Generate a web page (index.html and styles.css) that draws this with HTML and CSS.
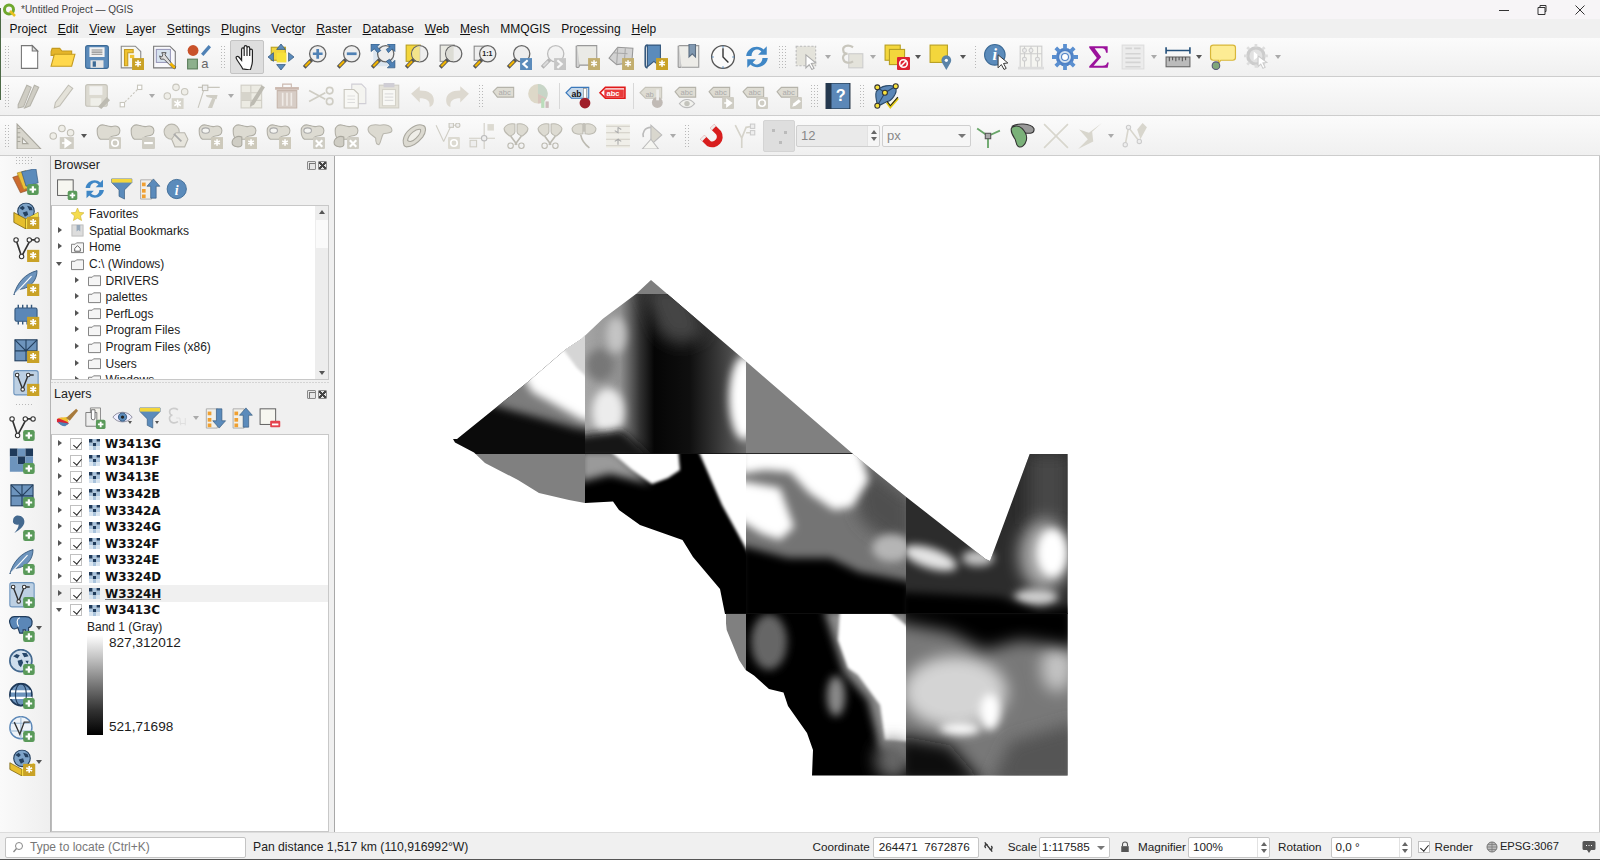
FILE: index.html
```html
<!DOCTYPE html>
<html lang="en">
<head>
<meta charset="utf-8">
<title>*Untitled Project — QGIS</title>
<link rel="stylesheet" href="styles.css">
</head>
<body>
<svg class="sprites">
<defs>
<g id="g"><rect x="13" y="13" width="11" height="11" fill="#c9a227"/><path d="M18.5 15v6M15.9 16.5l5.2 3M15.9 19.5l5.2-3" stroke="#fff" stroke-width="1.5"/></g>
<g id="p"><rect x="13" y="14" width="10.5" height="10" rx="2" fill="#5a9a5a"/><path d="M18.2 16v6M15.2 19h6" stroke="#fff" stroke-width="2"/></g>
<g id="m"><circle cx="14.500" cy="9" r="7.500" fill="#eee" stroke="#666" stroke-width="1.200"/><path d="M9 14.500L2 21.500" stroke="#555" stroke-width="3.500"/><path d="M7.500 16L3 20.500" stroke="#f0b400" stroke-width="2"/></g>
<g id="bl"><path d="M2 7c0-4 3-6 7-5 3 1 5 2 8 1 3-1 6 1 6 4 0 4-3 5-6 5-3 0-3 1-4 3H5C3 14 2 11 2 7z" fill="#dddbd2" stroke="#b0aea5"/></g>
<g id="tag"><path d="M1 8l4-4h15v9H5z" fill="#dedcd3" stroke="#b5b3aa"/><text x="6" y="11.500" class="tt" fill="#aaa">abc</text></g>
<g id="vl"><path d="M3 4L8 19 16 4 22 4" fill="none" stroke="#333" stroke-width="1.500"/><circle cx="3" cy="4" r="2" fill="#fff" stroke="#333"/><circle cx="8" cy="19" r="2" fill="#fff" stroke="#333"/><circle cx="15" cy="4" r="2" fill="#fff" stroke="#333"/><circle cx="22" cy="4" r="2" fill="#fff" stroke="#333"/></g>
<g id="fe"><path d="M1 23C4 12 11 4 22 1c0 8-5 16-16 17-2 1-3 3-5 5z" fill="#6d94bd" stroke="#34577c" stroke-width=".8"/><path d="M2 22L17 6" stroke="#fff"/></g>
<g id="ms"><rect x="2" y="3" width="20" height="19" fill="#6d94bd" stroke="#24405f"/><path d="M2 3l10 10L22 3M12 3v19M2 13h20" stroke="#24405f" fill="none"/></g>
<g id="gl"><circle cx="11" cy="11" r="10" fill="#cfdeec" stroke="#44698f" stroke-width="1.500"/><path d="M4 7l3-2 3 1-2 3zM12 4l4 0 2 3-4 1zM8 11l4-1 1 3-2 4-2-2zM15 11l3 0-1 3z" fill="#26476a"/></g>
<g id="wd"><circle cx="12" cy="8" r="7.500" fill="#7da3c8" stroke="#24405f"/><path d="M6 5l3-2 2 2-2 2zM13 3l4 1 1 3-3 0zM9 9l4-1 1 3-3 2z" fill="#24405f"/></g>
<g id="cr"><path d="M13 10l0 12 3-3 2.500 4.500 2-1-2.500-4.500 4-.5z" fill="#fff" stroke="#333" stroke-width=".9"/></g>
<symbol id="new" viewBox="0 0 24 24"><path d="M5 1.500h10l5 5v16H5z" fill="#fff" stroke="#777"/><path d="M15 1.500v5h5z" fill="#ddd" stroke="#777"/></symbol>
<symbol id="open" viewBox="0 0 24 24"><path d="M1 7l1-3h7l2 2.500h9v4H1z" fill="#e5b52a" stroke="#c49a1f"/><path d="M1 20.500h19l3-11H4z" fill="#ffd84c" stroke="#c49a1f"/></symbol>
<symbol id="save" viewBox="0 0 24 24"><rect x="1.500" y="1.500" width="21" height="21" rx="2" fill="#5b8bbb" stroke="#3c6a96"/><rect x="5" y="3" width="14" height="9" fill="#f2f2f2"/><path d="M7 5.500h10M7 7.500h10M7 9.500h10" stroke="#888"/><rect x="6" y="15" width="12" height="7" fill="#e5e5e5"/><rect x="8" y="16" width="3" height="5" fill="#3c6a96"/></symbol>
<symbol id="lay" viewBox="0 0 24 24"><path d="M3 2h13l5 5v15H3z" fill="#f8f8f2" stroke="#888"/><path d="M6 5h8v3H9v12H6z" fill="#f0c330" stroke="#c49a1f"/><rect x="11" y="10" width="4" height="3" fill="#f0c330"/><use href="#g"/></symbol>
<symbol id="mgr" viewBox="0 0 24 24"><path d="M1.500 2h15l5 5v15h-20z" fill="#f8f8fb" stroke="#777"/><rect x="4" y="5" width="13" height="12" fill="#d7e3ef" stroke="#99b"/><path d="M9 8l4 0-1 2 7 9 3 2-1 2-2-1-8-8-3 0-1-3 2 1 1-2z" fill="#ddd" stroke="#444" stroke-width=".8"/><path d="M17 18l4 4" stroke="#f0b400" stroke-width="2.500"/></symbol>
<symbol id="sty" viewBox="0 0 24 24"><circle cx="6.500" cy="6" r="5" fill="#c9522a"/><path d="M15 10l7-8" stroke="#4f81b5" stroke-width="3"/><rect x="1.500" y="14" width="9" height="9" fill="#8db08d" stroke="#5a7c5a"/><text x="14" y="22" class="ta">a</text></symbol>
<symbol id="pan" viewBox="0 0 24 24"><path d="M8 23c-1-3-5-7-6-10-.4-1.500 1.500-2 2.500-1L7 15V5c0-2 2.400-2 2.400 0v6-8c0-2 2.600-2 2.600 0v8-7c0-2 2.500-2 2.500 0v7-5c0-1.800 2.500-1.800 2.500 0v10c0 3-1 5-2 8z" fill="#fff" stroke="#222" stroke-width="1.100"/></symbol>
<symbol id="pans" viewBox="0 0 24 24"><rect x="3" y="3" width="13" height="12" fill="#f3d63c" stroke="#b79f20"/><rect x="8" y="8" width="9" height="9" fill="#f7e23c"/><path d="M12 0l4 5H8zM12 24l-4-5h8zM0 12l5-4v8zM24 12l-5 4V8z" fill="#5b8bbb" stroke="#34577c" stroke-width=".7"/></symbol>
<symbol id="zin" viewBox="0 0 24 24"><use href="#m"/><path d="M14.500 4.500v9M10 9h9" stroke="#4f81b5" stroke-width="2.500"/></symbol>
<symbol id="zout" viewBox="0 0 24 24"><use href="#m"/><path d="M10 9h9" stroke="#4f81b5" stroke-width="2.500"/></symbol>
<symbol id="zfull" viewBox="0 0 24 24"><rect x="3" y="1.500" width="19" height="19" fill="#dbe5ef"/><use href="#m"/><path d="M1 0h8L6.500 2.500 10 6 7 8 4 4.500 1 7zM23 0v7l-2.500-2.500L17 8l-2-3 3.500-2.500L16 0zM23 22h-7l2.500-2.500L15 16l3-2 2.500 3.500L23 15z" fill="#4f81b5" stroke="#2a5278" stroke-width=".6"/></symbol>
<symbol id="zsel" viewBox="0 0 24 24"><rect x="2" y="1" width="13" height="15" fill="#f3d63c" stroke="#b79f20"/><use href="#m"/><path d="M14.500 1.500v15" stroke="#bbb"/><path d="M14.500 2a7 7 0 0 0 0 14z" fill="#f3e48a"/></symbol>
<symbol id="zlay" viewBox="0 0 24 24"><rect x="2" y="1" width="13" height="15" fill="#e9e9e2" stroke="#888"/><use href="#m"/><path d="M14.500 2a7 7 0 0 0 0 14z" fill="#dcdcd5"/></symbol>
<symbol id="znat" viewBox="0 0 24 24"><rect x="2" y="2" width="12" height="13" fill="#eee" stroke="#888"/><use href="#m"/><text x="9.500" y="11.500" class="tb1">1:1</text></symbol>
<symbol id="zlast" viewBox="0 0 24 24"><use href="#m"/><rect x="13" y="13" width="11" height="11" fill="#5b8bbb"/><path d="M20 15l-4 3.500 4 3.500" stroke="#fff" stroke-width="2" fill="none"/></symbol>
<symbol id="znext" viewBox="0 0 24 24"><use href="#m"/><rect x="13" y="13" width="11" height="11" fill="#5b8bbb"/><path d="M16 15l4 3.500-4 3.500" stroke="#fff" stroke-width="2" fill="none"/></symbol>
<symbol id="nmap" viewBox="0 0 24 24"><path d="M2 2c2-1 3 0 3 2v16c0 2-2 2-3 1z" fill="#ccc" stroke="#888"/><path d="M3 1.500h18v18H5" fill="#e8e8e0" stroke="#888"/><use href="#g"/></symbol>
<symbol id="n3d" viewBox="0 0 24 24"><path d="M1 13L9 3l14 1-1 13-14 2z" fill="#ccc" stroke="#888"/><path d="M5 8l13 1M9 3l-1 16M16 4l-1 14" stroke="#999" fill="none"/><use href="#g"/></symbol>
<symbol id="nbm" viewBox="0 0 24 24"><path d="M5 1h12v20l-6-5-6 5z" fill="#5b8bbb" stroke="#34577c"/><path d="M5 1c-2 0-2 2-2 3v15c0 2 1 3 2 3" fill="none" stroke="#34577c" stroke-width="1.500"/><use href="#g"/></symbol>
<symbol id="sbm" viewBox="0 0 24 24"><path d="M2 2c2-1 3 0 3 2v16c0 2-2 2-3 1z" fill="#ccc" stroke="#888"/><path d="M3 1.500h18v20H5" fill="#ecebe3" stroke="#888"/><path d="M12 0h6v12l-3-3-3 3z" fill="#5b8bbb" stroke="#34577c"/></symbol>
<symbol id="clk" viewBox="0 0 24 24"><circle cx="12" cy="12" r="10.500" fill="#fafafa" stroke="#555" stroke-width="1.200"/><path d="M12 4v8l5 5" stroke="#333" fill="none" stroke-width="1.300"/><path d="M12 1.500v2M12 20.500v2M1.500 12h2M20.500 12h2" stroke="#5b8bbb"/></symbol>
<symbol id="ref" viewBox="0 0 24 24"><path d="M2 11C3 3 13 0 18 5l3-3v8h-8l3-3C12 3 7 6 7 11z" fill="#3f87c6"/><path d="M22 13c-1 8-11 11-16 6l-3 3v-8h8l-3 3c4 4 9 1 9-4z" fill="#3f87c6"/></symbol>
<symbol id="sel" viewBox="0 0 24 24"><rect x="2" y="2" width="18" height="18" fill="#e4e3db" stroke="#bbb" stroke-dasharray="2 1.500"/><path d="M11 10l0 12 3-3 2.500 4.500 2-1-2.500-4.500 4-.5z" fill="#fff" stroke="#aaa"/></symbol>
<symbol id="sexp" viewBox="0 0 24 24"><rect x="9" y="9" width="13" height="13" fill="#e4e3db" stroke="#ccc"/><path d="M13 3C8 0 3 2 4 6c0 2 2 3 4 3-3 0-5 2-4 5 1 4 6 4 9 2" fill="none" stroke="#c8c6bd" stroke-width="2"/></symbol>
<symbol id="desel" viewBox="0 0 24 24"><rect x="1" y="1" width="14" height="14" fill="#f3d63c" stroke="#b79f20"/><rect x="5" y="5" width="14" height="14" fill="#f3d63c" stroke="#b79f20"/><rect x="12" y="12" width="12" height="12" rx="1" fill="#d23"/><circle cx="18" cy="18" r="3.500" fill="none" stroke="#fff" stroke-width="1.500"/><path d="M15.500 20.500l5-5" stroke="#fff" stroke-width="1.500"/></symbol>
<symbol id="sloc" viewBox="0 0 24 24"><rect x="1" y="1" width="16" height="16" fill="#f3d63c" stroke="#b79f20"/><path d="M16 24l-4-7a4.500 4.500 0 1 1 8 0z" fill="#5b84a8"/><circle cx="16" cy="15" r="1.500" fill="#fff"/></symbol>
<symbol id="idn" viewBox="0 0 24 24"><circle cx="10" cy="10" r="9.500" fill="#5b8bbb" stroke="#3c6a96"/><text x="10" y="15" class="ti">i</text><use href="#cr"/></symbol>
<symbol id="aba" viewBox="0 0 24 24"><rect x="2" y="2" width="20" height="20" fill="#f5f5f1" stroke="#ccc"/><path d="M2 9h20M6 2v20M12 2v20M18 2v20" stroke="#ccc" fill="none"/><rect x="0" y="21" width="24" height="2.500" fill="#ddd"/><circle cx="6" cy="6" r="1.800" fill="#eee" stroke="#ccc"/><circle cx="12" cy="6" r="1.800" fill="#eee" stroke="#ccc"/><circle cx="18" cy="14" r="1.800" fill="#eee" stroke="#ccc"/><circle cx="6" cy="14" r="1.800" fill="#eee" stroke="#ccc"/></symbol>
<symbol id="gear" viewBox="0 0 24 24"><circle cx="12" cy="12" r="7" fill="#d4e2f0" stroke="#4f81c5" stroke-width="3"/><path d="M12 0v5M12 19v5M0 12h5M19 12h5M3.500 3.500L7 7M17 17l3.500 3.500M3.500 20.500L7 17M17 7l3.500-3.500" stroke="#5a8fd0" stroke-width="3.500"/><circle cx="12" cy="12" r="3.200" fill="#fff" stroke="#4f81c5"/></symbol>
<symbol id="sum" viewBox="0 0 24 24"><path d="M3 2h17v6l-1.500 0C18 5 17 4 14 4H8l6 8-7 8h8c3 0 4-1 4.500-3l1.500 0-1 5H3v-1.500L10 13 3 3.500z" fill="#9b119b"/></symbol>
<symbol id="tbl" viewBox="0 0 24 24"><rect x="2" y="1" width="20" height="22" fill="#ececec" stroke="#ddd"/><path d="M5 4h6M13 4h6M5 9h14M5 13h14M5 17h14M5 21h14" stroke="#d4d4d4" stroke-width="1.500"/></symbol>
<symbol id="mea" viewBox="0 0 24 24"><path d="M1 6h22M1 3v6M23 3v6" stroke="#24507a" stroke-width="1.500" fill="none"/><rect x="1" y="12" width="22" height="9" fill="#bbb" stroke="#666"/><path d="M4 12v4M7 12v3M10 12v4M13 12v3M16 12v4M19 12v3" stroke="#555"/></symbol>
<symbol id="ann" viewBox="0 0 24 24"><path d="M3 1h18c1.500 0 2.500 1 2.500 2.500v9c0 1.500-1 2.500-2.500 2.500H10l-3 4 1-4H3C1.500 15 .5 14 .5 12.500v-9C.5 2 1.500 1 3 1z" fill="#fdec94" stroke="#d8b73a" stroke-width="1.100"/><circle cx="5.500" cy="20" r="3.500" fill="#7fa67a" stroke="#557"/></symbol>
<symbol id="act" viewBox="0 0 24 24"><circle cx="11" cy="11" r="7.500" fill="#e2e2e2" stroke="#ccc" stroke-width="3"/><path d="M11 0v3M11 19v3M0 11h3M19 11h3M3 3l2 2M17 17l2 2M3 19l2-2M17 5l2-2" stroke="#ddd" stroke-width="2.500"/><path d="M9 7l5 4-5 4z" fill="#fff"/><path d="M13 11l0 10 2.500-2.500 2 4 2-1-2-4 3.500-.5z" fill="#fff" stroke="#ccc"/></symbol>
<symbol id="pens" viewBox="0 0 24 24"><path d="M2 20L10 2l4 2-7 18-5 1zM9 21L17 2l4 2-8 17-5 2z" fill="#cfcdc4" stroke="#b5b3aa"/></symbol>
<symbol id="pen" viewBox="0 0 24 24"><path d="M5 18L17 2l4 3-12 16-5 2z" fill="#e4e2d9" stroke="#c0beb5"/></symbol>
<symbol id="savee" viewBox="0 0 24 24"><rect x="1.500" y="1.500" width="20" height="20" rx="2" fill="#dcdad1" stroke="#c5c3ba"/><rect x="5" y="3" width="12" height="8" fill="#f2f2f0"/><rect x="6" y="14" width="10" height="7" fill="#efefe9"/><path d="M13 22l8-9 3 3-8 8z" fill="#bdbbb2"/></symbol>
<symbol id="lin" viewBox="0 0 24 24"><path d="M4 20L20 4" stroke="#c8c6bd" stroke-dasharray="2 1.500"/><rect x="2" y="18" width="4" height="4" fill="#fff" stroke="#c8c6bd"/><rect x="18" y="2" width="4" height="4" fill="#fff" stroke="#c8c6bd"/></symbol>
<symbol id="ptg" viewBox="0 0 24 24"><circle cx="4" cy="12" r="3" fill="#efeee8" stroke="#c8c6bd"/><circle cx="12" cy="4" r="3" fill="#efeee8" stroke="#c8c6bd"/><circle cx="20" cy="8" r="3" fill="#efeee8" stroke="#c8c6bd"/><rect x="8" y="14" width="11" height="10" fill="#d6d4cb"/><path d="M13.500 15.500v7M10.500 17l6 4M10.500 21l6-4" stroke="#fff" stroke-width="1.400"/></symbol>
<symbol id="vtx" viewBox="0 0 24 24"><path d="M1 4h20M7 4L1 23" stroke="#c8c6bd" fill="none"/><rect x="5" y="2" width="5" height="5" fill="#eee" stroke="#c0beb5"/><path d="M8 11l11 0-1 4-9-2zM14 14l-4 9h4l3-8z" fill="#cfcdc4"/></symbol>
<symbol id="atr" viewBox="0 0 24 24"><rect x="1" y="2" width="19" height="21" fill="#ecebe3" stroke="#cfcdc4"/><path d="M1 9h19M1 16h19M10 2v21" stroke="#cfcdc4"/><rect x="1" y="9" width="9" height="7" fill="#d6d4cb"/><path d="M10 18L20 2l3 2-10 16-4 2z" fill="#bdbbb2"/></symbol>
<symbol id="trash" viewBox="0 0 24 24"><path d="M1 5h22" stroke="#cbb8ae" stroke-width="2.500"/><path d="M8 4V1h8v3" fill="none" stroke="#cbb8ae"/><path d="M3 7h18v16H3z" fill="#d7cdc6" stroke="#c5b5ab"/><path d="M8 9v12M12 9v12M16 9v12" stroke="#efeae6" stroke-width="1.500"/></symbol>
<symbol id="cut" viewBox="0 0 24 24"><path d="M1 7l15 8M1 17l15-8" stroke="#cfcdc4" stroke-width="1.500"/><circle cx="20" cy="7" r="3" fill="none" stroke="#cfcdc4" stroke-width="1.500"/><circle cx="20" cy="17" r="3" fill="none" stroke="#cfcdc4" stroke-width="1.500"/></symbol>
<symbol id="cpy" viewBox="0 0 24 24"><path d="M9 1h9l4 4v14H9z" fill="#f4f4f0" stroke="#d0ced5"/><path d="M2 6h9l4 4v13H2z" fill="#f8f8f5" stroke="#c8c6bd"/><path d="M5 12h7M5 15h7M5 18h7" stroke="#ddd"/></symbol>
<symbol id="pst" viewBox="0 0 24 24"><rect x="3" y="2" width="18" height="21" fill="#e4e2d9" stroke="#cfcdc4"/><rect x="7" y="0" width="10" height="4" fill="#d0ced5"/><rect x="6" y="6" width="12" height="15" fill="#f8f8f5" stroke="#d4d2c9"/><path d="M8 10h8M8 13h8M8 16h8" stroke="#ddd"/></symbol>
<symbol id="und" viewBox="0 0 24 24"><path d="M1 10l8-7v4c8 0 13 3 13 9 0 4-2 6-4 6 1-6-3-8-9-8v4z" fill="#ddd9d0"/></symbol>
<symbol id="red" viewBox="0 0 24 24"><path d="M23 10l-8-7v4C7 7 2 10 2 16c0 4 2 6 4 6-1-6 3-8 9-8v4z" fill="#ddd9d0"/></symbol>
<symbol id="abc" viewBox="0 0 24 24"><use href="#tag"/></symbol>
<symbol id="pie" viewBox="0 0 24 24"><circle cx="11" cy="10" r="9" fill="#ddd8c8"/><path d="M11 10V1a9 9 0 0 1 8 13z" fill="#c7d5c7"/><path d="M11 10l8 4a9 9 0 0 1-8 5z" fill="#d8c5bd"/><rect x="14" y="14" width="3" height="9" fill="#bdb"/><rect x="18" y="17" width="3" height="6" fill="#cbb"/></symbol>
<symbol id="abp" viewBox="0 0 24 24"><path d="M0 9l5-5h16v10H5z" fill="#c6d8ea" stroke="#3a78bb"/><text x="5" y="12.500" class="tb2">ab</text><rect x="16" y="5" width="3" height="11" fill="#fff" stroke="#888" stroke-width=".6"/><circle cx="17.500" cy="18.500" r="5" fill="#a01f2a"/></symbol>
<symbol id="abr" viewBox="0 0 24 24"><path d="M0 9l5-5h18v10H5z" fill="#fff" stroke="#e01a1a" stroke-width="1.500"/><path d="M4 6h18v7H4z" fill="#e93a3a"/><text x="6" y="12.300" class="tw">abc</text></symbol>
<symbol id="abt" viewBox="0 0 24 24"><path d="M0 9l5-5h15v10H5z" fill="#dedcd3" stroke="#c5c3ba"/><text x="5" y="12.500" class="tt" fill="#aaa">ab</text><circle cx="16" cy="18" r="5" fill="#c0bab5"/><rect x="15" y="6" width="2.500" height="10" fill="#eee"/></symbol>
<symbol id="abe" viewBox="0 0 24 24"><use href="#tag"/><path d="M5 19c4-5 10-5 14 0-4 5-10 5-14 0z" fill="#f2f2ee" stroke="#bbb"/><circle cx="12" cy="19" r="2.500" fill="#c3c3bc"/></symbol>
<symbol id="abm" viewBox="0 0 24 24"><use href="#tag"/><rect x="13" y="13" width="11" height="11" rx="1" fill="#cfcdc4"/><path d="M15 18.500h4M17.500 15.500l4 3-4 3z" stroke="#fff" fill="#fff" stroke-width="1.500"/></symbol>
<symbol id="abo" viewBox="0 0 24 24"><use href="#tag"/><rect x="13" y="13" width="11" height="11" rx="1" fill="#cfcdc4"/><circle cx="18.500" cy="18.500" r="3" fill="none" stroke="#fff" stroke-width="1.500"/></symbol>
<symbol id="abd" viewBox="0 0 24 24"><use href="#tag"/><rect x="13" y="13" width="11" height="11" rx="1" fill="#cfcdc4"/><path d="M15 22l1-3 5-4 2 2-5 4z" fill="#fff"/></symbol>
<symbol id="hlp" viewBox="0 0 24 24"><rect x="1" y="0" width="22" height="24" fill="#5b87b7" stroke="#1f2f40"/><rect x="1" y="0" width="5" height="24" fill="#24384e"/><text x="14.500" y="17" class="tq">?</text></symbol>
<symbol id="net" viewBox="0 0 24 24"><path d="M3 8c4-6 14-7 18-4 2 5-4 13-8 13-4 2-8 5-9 3C3 16 2 11 3 8z" fill="#5b87b7" stroke="#2a4a6a"/><path d="M4 4l7 5 10-6M11 9L4 21" stroke="#2a4a6a" fill="none"/><circle cx="4" cy="4" r="2.300" fill="#f7e23c" stroke="#333"/><circle cx="21" cy="3" r="2.300" fill="#f7e23c" stroke="#333"/><circle cx="11" cy="9" r="2.300" fill="#f7e23c" stroke="#333"/><circle cx="4" cy="21" r="2.300" fill="#f7e23c" stroke="#333"/><path d="M13 18l3 4 7-8" fill="none" stroke="#e5cc10" stroke-width="2.500"/><path d="M13 17l3 4 7-8" fill="none" stroke="#222"/></symbol>
<symbol id="rul" viewBox="0 0 24 24"><path d="M1 1l22 23H1z" fill="#d8d6cd" stroke="#a8a69d"/><path d="M6 14l5 5H6z" fill="#f2f2f0" stroke="#a8a69d"/><path d="M1 5h3M1 9h3M1 13h3M1 17h3" stroke="#a8a69d"/></symbol>
<symbol id="pta" viewBox="0 0 24 24"><circle cx="3" cy="12" r="3" fill="#efeee8" stroke="#c0beb5"/><circle cx="11" cy="5" r="3" fill="#efeee8" stroke="#c0beb5"/><circle cx="19" cy="9" r="3" fill="#efeee8" stroke="#c0beb5"/><rect x="9" y="13" width="13" height="11" fill="#cfcdc4"/><path d="M11 18.500h5M14 15l5 3.500-5 3.500z" stroke="#fff" stroke-width="1.500" fill="#fff"/></symbol>
<symbol id="b1" viewBox="0 0 24 24"><use href="#bl"/><rect x="13" y="13" width="11" height="11" rx="1" fill="#cfcdc4"/><circle cx="18.500" cy="18.500" r="3" fill="none" stroke="#fff" stroke-width="1.500"/></symbol>
<symbol id="b2" viewBox="0 0 24 24"><use href="#bl"/><rect x="12" y="13" width="12" height="11" rx="1" fill="#cfcdc4"/><path d="M14 18.500h8" stroke="#fff" stroke-width="2"/></symbol>
<symbol id="b3" viewBox="0 0 24 24"><circle cx="8" cy="8" r="7" fill="#dcdad1" stroke="#b9b7ae"/><path d="M12 9l8 0 3 6-3 7H11l-3-7z" fill="#e7e5dd" stroke="#b9b7ae"/><path d="M10 10l7 7" stroke="#aaa" stroke-width="1.500"/></symbol>
<symbol id="b4" viewBox="0 0 24 24"><use href="#bl"/><ellipse cx="8" cy="7" rx="3.500" ry="2.500" fill="#f4f4f1" stroke="#aaa"/><rect x="13" y="13" width="11" height="11" fill="#cdc9bb"/><path d="M18.500 15v6M15.900 16.500l5.200 3M15.900 19.500l5.200-3" stroke="#fff" stroke-width="1.500"/></symbol>
<symbol id="b5" viewBox="0 0 24 24"><use href="#bl"/><path d="M1 18c0-4 5-7 9-5v7c0 3-9 3-9-2z" fill="#cfcdc4" stroke="#a9a79e"/><rect x="13" y="13" width="11" height="11" fill="#cdc9bb"/><path d="M18.500 15v6M15.900 16.500l5.200 3M15.900 19.500l5.200-3" stroke="#fff" stroke-width="1.500"/></symbol>
<symbol id="b7" viewBox="0 0 24 24"><use href="#bl"/><ellipse cx="8" cy="7" rx="3.500" ry="2.500" fill="#f4f4f1" stroke="#aaa"/><rect x="13" y="13" width="11" height="11" rx="1" fill="#cfcdc4"/><path d="M15.500 16l6 6M21.500 16l-6 6" stroke="#fff" stroke-width="2"/></symbol>
<symbol id="b8" viewBox="0 0 24 24"><use href="#bl"/><path d="M1 18c0-4 5-7 9-5v7c0 3-9 3-9-2z" fill="#cfcdc4" stroke="#a9a79e"/><rect x="13" y="13" width="11" height="11" rx="1" fill="#cfcdc4"/><path d="M15.500 16l6 6M21.500 16l-6 6" stroke="#fff" stroke-width="2"/></symbol>
<symbol id="b9" viewBox="0 0 24 24"><path d="M1 6c0-4 5-5 11-4 5-1 11 0 11 5 0 3-5 2-8 3-2 3-2 8-4 10-2 0-3-2-3-6C5 11 1 10 1 6z" fill="#dcdad1" stroke="#b9b7ae"/></symbol>
<symbol id="b10" viewBox="0 0 24 24"><path d="M2 16C3 8 13 0 20 2c4 1 3 7 0 11-5 6-10 9-15 9-2 0-3-3-3-6z" fill="#dcdad1" stroke="#a9a79e"/><path d="M6 16C7 10 14 5 18 6c1 3-2 6-4 8-3 3-6 4-8 2z" fill="#efeee8" stroke="#a9a79e"/></symbol>
<symbol id="b11" viewBox="0 0 24 24"><path d="M1 2l7 15M8 17l7-15 7 0" fill="none" stroke="#cfcdc4"/><rect x="12" y="13" width="11" height="11" rx="1" fill="#dcdad1"/><circle cx="17.500" cy="18.500" r="3" fill="none" stroke="#fff" stroke-width="1.500"/><rect x="13" y="0" width="4" height="4" fill="#eee" stroke="#c8c6bd"/><circle cx="21" cy="2" r="2" fill="#eee" stroke="#c8c6bd"/></symbol>
<symbol id="b12" viewBox="0 0 24 24"><path d="M0 14h24M14 0v24" stroke="#cfcdc4"/><rect x="17" y="1" width="6" height="6" fill="#dcdad1"/><rect x="1" y="16" width="6" height="6" fill="#eee" stroke="#cfcdc4"/><circle cx="14" cy="14" r="2.500" fill="#eee" stroke="#bbb"/></symbol>
<symbol id="b13" viewBox="0 0 24 24"><path d="M11 1c-5-1-9 1-10 4 0 4 3 5 5 7 2 0 5-2 5-4zM13 1c5-1 9 1 10 4 0 4-3 5-5 7-2 0-5-2-5-4z" fill="#dddbd2" stroke="#bcbab1"/><path d="M7 12l6 8M17 12l-6 8" stroke="#bcbab1" stroke-width="1.500"/><circle cx="7" cy="21" r="2.500" fill="none" stroke="#bcbab1"/><circle cx="17" cy="21" r="2.500" fill="none" stroke="#bcbab1"/></symbol>
<symbol id="b14" viewBox="0 0 24 24"><path d="M11 1c-5-1-9 1-10 4 0 5 5 6 10 5zM13 1c5-1 9 1 10 4 0 5-5 6-10 5z" fill="#dddbd2" stroke="#bcbab1"/><path d="M12 0v8M9 11c1 6 4 9 8 12" stroke="#bcbab1" fill="none" stroke-width="1.500"/></symbol>
<symbol id="b15" viewBox="0 0 24 24"><rect x="1" y="1" width="22" height="22" fill="#f0efe9"/><path d="M1 3h22M1 9h22M1 15h22M1 21h22" stroke="#cfcdc4"/><path d="M12 4v5l-3-2M12 4l3 2M12 20v-5l-3 2M12 15l3 2" stroke="#aaa" fill="none"/></symbol>
<symbol id="b16" viewBox="0 0 24 24"><path d="M11 20V2l10 9z" fill="#d9d7ce" stroke="#bbb"/><path d="M11 4C5 4 3 9 4 13" fill="none" stroke="#bbb" stroke-width="1.500"/><path d="M3 24l8-9 7 9z" fill="#f5f5f1" stroke="#bbb"/></symbol>
<symbol id="mag" viewBox="0 0 24 24"><path d="M4 13l6 6a7 7 0 0 0 9-10l-6-6" fill="none" stroke="#d81e1e" stroke-width="5.500"/><path d="M4 13l1.800 1.800M13 3l1.800 1.800" stroke="#eee" stroke-width="5.500"/></symbol>
<symbol id="vsn" viewBox="0 0 24 24"><path d="M3 2l6 12M9 14l4-10 6-1M13 9l6 0M9 14v9" fill="none" stroke="#d5d3ca" stroke-width="1.500"/><rect x="17" y="1" width="4" height="4" fill="#eee" stroke="#ccc"/><rect x="17" y="7" width="4" height="4" fill="#eee" stroke="#ccc"/></symbol>
<symbol id="trc" viewBox="0 0 24 24"><path d="M12 12L2 5M12 12L23 7M12 12v11" stroke="#69a669" stroke-width="1.700"/><rect x="9.500" y="9.500" width="5" height="5" fill="#aaa" stroke="#555"/></symbol>
<symbol id="avo" viewBox="0 0 24 24"><path d="M3 3c4-3 17-3 20 2 1 5-4 5-9 4z" fill="#999" stroke="#333"/><path d="M2 6c0-3 6-5 10-1 3 3 5 7 4 11-1 4-4 7-7 6-3-1-2-6-4-8-2-3-3-5-3-8z" fill="#7ab179" stroke="#333"/></symbol>
<symbol id="xx" viewBox="0 0 24 24"><path d="M1 1l22 22M23 1L1 23" stroke="#d8d6cd" stroke-width="1.500"/></symbol>
<symbol id="xm" viewBox="0 0 24 24"><path d="M23 0L14 8l1 9-14 7 9-9-8-9 9 3z" fill="#d8d6cd"/></symbol>
<symbol id="nod" viewBox="0 0 24 24"><path d="M3 20l3-16 10 13" fill="none" stroke="#d8d6cd" stroke-width="1.500"/><circle cx="3" cy="20" r="2" fill="#eee" stroke="#ccc"/><circle cx="6" cy="4" r="2" fill="#eee" stroke="#ccc"/><circle cx="16" cy="17" r="2" fill="#eee" stroke="#ccc"/><path d="M14 6l5-6 4 4-6 11z" fill="#d8d6cd"/></symbol>
<symbol id="l1" viewBox="0 0 24 24"><path d="M0 8l6-2 7 14-6 2z" fill="#cc6b2f" stroke="#8a4a20" stroke-width=".6"/><path d="M4 4l8-2 6 14-8 3z" fill="#ebc03a" stroke="#a88a20" stroke-width=".6"/><path d="M8 3l13-3 2 13-11 3z" fill="#5b8bbb" stroke="#34577c" stroke-width=".6"/><use href="#p"/></symbol>
<symbol id="l2" viewBox="0 0 24 24"><use href="#wd"/><path d="M1 9l11 6 11-6v9l-11 6-11-6z" fill="#e6be2e" stroke="#7a6410" stroke-width=".7"/><path d="M12 15v9" stroke="#7a6410"/><path d="M12 15l11-6v9l-11 6z" fill="#f6e04a"/><use href="#g"/></symbol>
<symbol id="l3" viewBox="0 0 24 24"><use href="#vl"/><use href="#g"/></symbol>
<symbol id="l4" viewBox="0 0 24 24"><use href="#fe"/><use href="#g"/></symbol>
<symbol id="l5" viewBox="0 0 24 24"><rect x="2" y="5" width="20" height="12" rx="1.500" fill="#5b87b7" stroke="#34577c"/><path d="M5 2v3M9 2v3M13 2v3M17 2v3M5 17v3M9 17v3M13 17v3" stroke="#34577c" stroke-width="1.300"/><use href="#g"/></symbol>
<symbol id="l6" viewBox="0 0 24 24"><use href="#ms"/><use href="#g"/></symbol>
<symbol id="l7" viewBox="0 0 24 24"><rect x="1" y="1" width="22" height="22" rx="2" fill="#bdd0e3" stroke="#6d94bd"/><path d="M4 5l5 13 5-13h5" fill="none" stroke="#333" stroke-width="1.300"/><circle cx="4" cy="5" r="1.600" fill="#fff" stroke="#333"/><circle cx="9" cy="18" r="1.600" fill="#fff" stroke="#333"/><circle cx="14" cy="5" r="1.600" fill="#fff" stroke="#333"/><use href="#g"/></symbol>
<symbol id="l8" viewBox="0 0 24 24"><use href="#vl"/><use href="#p"/></symbol>
<symbol id="l9" viewBox="0 0 24 24"><path d="M1 1h7v7H1zM15 1h7v7h-7zM8 8h7v7H8z" fill="#1f3a5a"/><path d="M8 1h7v7H8zM1 8h7v7H1zM15 8h7v7h-7zM1 15h7v7H1zM8 15h7v7H8z" fill="#6d94bd"/><use href="#p"/></symbol>
<symbol id="l10" viewBox="0 0 24 24"><use href="#ms"/><use href="#p"/></symbol>
<symbol id="l11" viewBox="0 0 24 24"><path d="M8 1c4 0 7 3 6 7-1 4-6 7-9 9 2-3 4-5 4-8-3 1-6-1-5-4 0-2 2-4 4-4z" fill="#44698f"/><use href="#p"/></symbol>
<symbol id="l12" viewBox="0 0 24 24"><use href="#fe"/><use href="#p"/></symbol>
<symbol id="l13" viewBox="0 0 24 24"><rect x="1" y="1" width="22" height="22" rx="2" fill="#bdd0e3" stroke="#6d94bd"/><path d="M4 5l5 13 5-13h5" fill="none" stroke="#333" stroke-width="1.300"/><circle cx="4" cy="5" r="1.600" fill="#fff" stroke="#333"/><circle cx="9" cy="18" r="1.600" fill="#fff" stroke="#333"/><circle cx="14" cy="5" r="1.600" fill="#fff" stroke="#333"/><use href="#p"/></symbol>
<symbol id="l14" viewBox="0 0 24 24"><path d="M5 1h10c5 0 7 3 6 7-1 3-2 3-3 3v5h-3v-3h-2v3h-3c-1-2-1-4-2-5-4 3-6 0-7-4C0 4 2 1 5 1z" fill="#5b87b7" stroke="#1f3a5a"/><path d="M10 2c-3 1-3 5-1 8" fill="none" stroke="#fff"/><use href="#p"/></symbol>
<symbol id="l15" viewBox="0 0 24 24"><use href="#gl"/><use href="#p"/></symbol>
<symbol id="l16" viewBox="0 0 24 24"><circle cx="11" cy="11" r="10" fill="#6d94bd" stroke="#1f3a5a" stroke-width="1.500"/><path d="M2 8h18M1 14h20" stroke="#fff" stroke-width="2"/><ellipse cx="11" cy="11" rx="5" ry="10" fill="none" stroke="#1f3a5a"/><use href="#p"/></symbol>
<symbol id="l17" viewBox="0 0 24 24"><circle cx="11" cy="11" r="10" fill="#eef3f8" stroke="#5b87b7" stroke-width="1.300"/><path d="M2 7h18M1 14h20M11 1v20" stroke="#9cb9d4"/><path d="M5 6l5 11 4-11h5" fill="none" stroke="#333" stroke-width="1.200"/><use href="#p"/></symbol>
<symbol id="l18" viewBox="0 0 24 24"><use href="#wd"/><path d="M1 12l11 6v6L1 18z" fill="#e6be2e" stroke="#7a6410" stroke-width=".7"/><path d="M12 18l11-6v8l-11 4z" fill="#f6e04a"/><use href="#g"/></symbol>
<symbol id="fol" viewBox="0 0 14 14"><path d="M.5 3.500h4l1.500-1.500h7.500v10.500H.5z" fill="#f5f5f5" stroke="#777"/></symbol>
<symbol id="star" viewBox="0 0 14 14"><path d="M7 0l2 4.700 5 .5-3.800 3.300 1.200 5L7 11l-4.400 2.500 1.200-5L0 5.200l5-.5z" fill="#f5dc4e" stroke="#c9ae30" stroke-width=".6"/></symbol>
<symbol id="bkm" viewBox="0 0 14 14"><rect x="1" y="1" width="12" height="12" fill="#ddd" stroke="#bbb"/><path d="M6 1h4v7L8 6.500 6 8z" fill="#9ab"/></symbol>
<symbol id="hom" viewBox="0 0 14 14"><path d="M.5 3.500h4l1.500-1.500h7.500v10.500H.5z" fill="#f5f5f5" stroke="#777"/><path d="M4 8l3-3 3 3v3H4z" fill="#fff" stroke="#555"/></symbol>
<symbol id="ras" viewBox="0 0 12 12"><path d="M0 0h4v4H0zM8 0h4v3H8zM4 4h4v4H4z" fill="#1f3a5a"/><path d="M4 0h4v4H4zM0 4h4v4H0zM8 3h4v5H8zM4 8h4v4H4z" fill="#a9c3dc"/><path d="M0 8h4v4H0zM8 8h4v4H8z" fill="#d8e4ef"/></symbol>
<symbol id="padd" viewBox="0 0 24 24"><rect x="2" y="2" width="17" height="17" fill="#f6f6f0" stroke="#555"/><use href="#p"/></symbol>
<symbol id="funn" viewBox="0 0 24 24"><path d="M1 1h22v4l-8 8v10l-6-3v-7L1 5z" fill="#5b8bbb" stroke="#34577c" stroke-width=".7"/><rect x="1" y="1" width="22" height="4" fill="#f3d63c"/></symbol>
<symbol id="xpd" viewBox="0 0 24 24"><path d="M2 2h12v21H2z" fill="#f1f0ea" stroke="#aaa"/><rect x="3.500" y="5" width="4" height="4" fill="#f0a030"/><rect x="3.500" y="12" width="4" height="4" fill="#f0a030"/><rect x="3.500" y="18" width="4" height="4" fill="#f0a030"/><path d="M16 1l7 8h-4v13h-6V9H9z" fill="#5b8bbb" stroke="#34577c" stroke-width=".7"/></symbol>
<symbol id="cls" viewBox="0 0 24 24"><path d="M2 2h12v21H2z" fill="#f1f0ea" stroke="#aaa"/><rect x="3.500" y="5" width="4" height="4" fill="#f0a030"/><rect x="3.500" y="12" width="4" height="4" fill="#f0a030"/><rect x="3.500" y="18" width="4" height="4" fill="#f0a030"/><path d="M16 23l7-8h-4V2h-6v13H9z" fill="#5b8bbb" stroke="#34577c" stroke-width=".7"/></symbol>
<symbol id="inf" viewBox="0 0 24 24"><circle cx="12" cy="12" r="10.500" fill="#5b8bbb" stroke="#3c6a96"/><text x="12" y="18" class="ti">i</text></symbol>
<symbol id="brs" viewBox="0 0 24 24"><path d="M1 13c3-1 6-2 9 0l4 5c-4 3-9 2-13-2z" fill="#d23"/><path d="M2 16l12 2-4 3c-4 0-6-2-8-5z" fill="#4f81b5"/><path d="M2 12l10-1 2 6z" fill="#f0c330"/><path d="M11 12L22 2l2 2-9 11z" fill="#a87b3c"/></symbol>
<symbol id="grp" viewBox="0 0 24 24"><path d="M7 1h11v15H7z" fill="#f1f0ea" stroke="#888"/><path d="M2 6h12v15H2z" fill="#eee" stroke="#777"/><path d="M8 3h4v9a2 2 0 0 1-4 0z" fill="#fff" stroke="#666"/><use href="#p"/></symbol>
<symbol id="eye" viewBox="0 0 24 24"><path d="M1 11c5-7 16-7 21 0-5 7-16 7-21 0z" fill="#eef" stroke="#889"/><circle cx="11.500" cy="11" r="4.500" fill="#5b8bbb" stroke="#34577c"/><circle cx="11.500" cy="11" r="1.800" fill="#222"/></symbol>
<symbol id="eps" viewBox="0 0 24 24"><path d="M12 3C7 0 2 2 3 6c0 2 2 3 3 3-2 0-4 2-3 5 1 4 6 4 9 2" fill="none" stroke="#ccc" stroke-width="1.800"/><path d="M10 12h4l1 8M20 12v8M14 18h6" stroke="#ddd" fill="none"/></symbol>
<symbol id="rem" viewBox="0 0 24 24"><rect x="2" y="2" width="17" height="17" fill="#f6f6f0" stroke="#555"/><rect x="13" y="15" width="11" height="7" rx="1" fill="#e5434e"/><rect x="15" y="18" width="7" height="2" fill="#fff"/></symbol>
</defs>
</svg>

<div class="app">
  <header class="titlebar">
    <svg class="logo" viewBox="0 0 14 14"><circle cx="7" cy="6.500" r="4.500" fill="none" stroke="#6fa82e" stroke-width="3"/><path d="M8 8l5 5" stroke="#e8c020" stroke-width="2.500"/></svg>
    <span class="wintitle">*Untitled Project — QGIS</span>
    <div class="winbtns">
      <svg class="wb" viewBox="0 0 12 12"><path d="M1 6.500h10" stroke="#333"/></svg>
      <svg class="wb" viewBox="0 0 12 12"><path d="M2 3.500h7v7H2zM4 3.500V1.500h6v6H9" fill="none" stroke="#333"/></svg>
      <svg class="wb" viewBox="0 0 12 12"><path d="M1.500 1.500l9 9M10.500 1.500l-9 9" stroke="#333"/></svg>
    </div>
  </header>

  <nav class="menubar">
    <span class="mi">Pro<u>j</u>ect</span><span class="mi"><u>E</u>dit</span><span class="mi"><u>V</u>iew</span><span class="mi"><u>L</u>ayer</span><span class="mi"><u>S</u>ettings</span><span class="mi"><u>P</u>lugins</span><span class="mi">Vect<u>o</u>r</span><span class="mi"><u>R</u>aster</span><span class="mi"><u>D</u>atabase</span><span class="mi"><u>W</u>eb</span><span class="mi"><u>M</u>esh</span><span class="mi">MMQGIS</span><span class="mi">Pro<u>c</u>essing</span><span class="mi"><u>H</u>elp</span>
  </nav>

  <div class="tb">
    <span class="hd"></span>
    <svg class="i"><use href="#new"/></svg><svg class="i"><use href="#open"/></svg><svg class="i"><use href="#save"/></svg><svg class="i"><use href="#lay"/></svg><svg class="i"><use href="#mgr"/></svg><svg class="i"><use href="#sty"/></svg>
    <span class="hd h14"></span>
    <span class="on"><svg class="i"><use href="#pan"/></svg></span>
    <svg class="i"><use href="#pans"/></svg><svg class="i"><use href="#zin"/></svg><svg class="i"><use href="#zout"/></svg><svg class="i"><use href="#zfull"/></svg><svg class="i"><use href="#zsel"/></svg><svg class="i"><use href="#zlay"/></svg><svg class="i"><use href="#znat"/></svg><svg class="i"><use href="#zlast"/></svg><svg class="i off"><use href="#znext"/></svg><svg class="i dim"><use href="#nmap"/></svg><svg class="i dim"><use href="#n3d"/></svg><svg class="i"><use href="#nbm"/></svg><svg class="i dim"><use href="#sbm"/></svg><svg class="i"><use href="#clk"/></svg><svg class="i"><use href="#ref"/></svg>
    <span class="hd h16"></span>
    <svg class="i"><use href="#sel"/></svg><span class="dd lt"></span>
    <svg class="i"><use href="#sexp"/></svg><span class="dd lt"></span>
    <svg class="i"><use href="#desel"/></svg><span class="dd"></span>
    <svg class="i"><use href="#sloc"/></svg><span class="dd"></span>
    <span class="hd h10"></span>
    <svg class="i"><use href="#idn"/></svg><svg class="i"><use href="#aba"/></svg><svg class="i"><use href="#gear"/></svg><svg class="i"><use href="#sum"/></svg>
    <svg class="i"><use href="#tbl"/></svg><span class="dd lt"></span>
    <svg class="i"><use href="#mea"/></svg><span class="dd"></span>
    <svg class="i"><use href="#ann"/></svg>
    <svg class="i"><use href="#act"/></svg><span class="dd lt"></span>
  </div>

  <div class="tb">
    <span class="hd"></span>
    <svg class="i"><use href="#pens"/></svg><svg class="i"><use href="#pen"/></svg><svg class="i"><use href="#savee"/></svg>
    <svg class="i"><use href="#lin"/></svg><span class="dd lt"></span>
    <svg class="i"><use href="#ptg"/></svg>
    <svg class="i"><use href="#vtx"/></svg><span class="dd lt n"></span>
    <svg class="i"><use href="#atr"/></svg><svg class="i"><use href="#trash"/></svg><svg class="i"><use href="#cut"/></svg><svg class="i"><use href="#cpy"/></svg><svg class="i"><use href="#pst"/></svg><svg class="i"><use href="#und"/></svg><svg class="i"><use href="#red"/></svg>
    <span class="hd h14"></span>
    <svg class="i"><use href="#abc"/></svg><svg class="i"><use href="#pie"/></svg>
    <span class="sp"></span>
    <svg class="i"><use href="#abp"/></svg><svg class="i"><use href="#abr"/></svg>
    <span class="sp"></span>
    <svg class="i"><use href="#abt"/></svg><svg class="i"><use href="#abe"/></svg><svg class="i"><use href="#abm"/></svg><svg class="i"><use href="#abo"/></svg><svg class="i"><use href="#abd"/></svg>
    <span class="hd h15"></span>
    <svg class="i"><use href="#hlp"/></svg>
    <span class="hd h14"></span>
    <svg class="i"><use href="#net"/></svg>
  </div>

  <div class="tb tall">
    <span class="hd"></span>
    <svg class="i"><use href="#rul"/></svg>
    <svg class="i"><use href="#pta"/></svg><span class="dd"></span>
    <svg class="i"><use href="#b1"/></svg><svg class="i"><use href="#b2"/></svg><svg class="i"><use href="#b3"/></svg><svg class="i"><use href="#b4"/></svg><svg class="i"><use href="#b5"/></svg><svg class="i"><use href="#b4"/></svg><svg class="i"><use href="#b7"/></svg><svg class="i"><use href="#b8"/></svg><svg class="i"><use href="#b9"/></svg><svg class="i"><use href="#b10"/></svg><svg class="i"><use href="#b11"/></svg><svg class="i"><use href="#b12"/></svg><svg class="i"><use href="#b13"/></svg><svg class="i"><use href="#b13"/></svg><svg class="i"><use href="#b14"/></svg><svg class="i"><use href="#b15"/></svg>
    <svg class="i"><use href="#b16"/></svg><span class="dd lt"></span>
    <span class="hd h14"></span>
    <svg class="i"><use href="#mag"/></svg>
    <svg class="i"><use href="#vsn"/></svg>
    <div class="snapbox"><span class="dots"></span></div>
    <div class="spin snapval dis"><span class="val">12</span><span class="arrows"><i class="up"></i><i class="down"></i></span></div>
    <div class="spin snapunit dis"><span class="val">px</span><span class="carets"></span></div>
    <svg class="i"><use href="#trc"/></svg>
    <svg class="i"><use href="#avo"/></svg>
    <svg class="i"><use href="#xx"/></svg>
    <svg class="i"><use href="#xm"/></svg><span class="dd lt"></span>
    <svg class="i"><use href="#nod"/></svg>
  </div>

  <main class="workspace">
    <aside class="lefttools">
      <span class="vhd"></span>
      <div class="lgrp">
        <svg class="i"><use href="#l1"/></svg><svg class="i"><use href="#l2"/></svg><svg class="i"><use href="#l3"/></svg><svg class="i"><use href="#l4"/></svg><svg class="i"><use href="#l5"/></svg><svg class="i"><use href="#l6"/></svg><svg class="i"><use href="#l7"/></svg>
      </div>
      <span class="vhd gapv"></span>
      <div class="lgrp second">
        <svg class="i"><use href="#l8"/></svg><svg class="i"><use href="#l9"/></svg><svg class="i"><use href="#l10"/></svg><svg class="i"><use href="#l11"/></svg><svg class="i"><use href="#l12"/></svg><svg class="i"><use href="#l13"/></svg>
        <div class="lrow"><svg class="i"><use href="#l14"/></svg><span class="dd"></span></div>
        <svg class="i"><use href="#l15"/></svg><svg class="i"><use href="#l16"/></svg><svg class="i"><use href="#l17"/></svg>
        <div class="lrow"><svg class="i"><use href="#l18"/></svg><span class="dd"></span></div>
      </div>
    </aside>

    <section class="docks">
      <div class="dock browser">
        <div class="dtitle"><span>Browser</span><span class="dbtns"><i class="dfl"></i><i class="dcl"></i></span></div>
        <div class="dtools">
          <svg class="i"><use href="#padd"/></svg><svg class="i n1"><use href="#ref"/></svg><svg class="i n1"><use href="#funn"/></svg><svg class="i n1"><use href="#xpd"/></svg><svg class="i n1"><use href="#inf"/></svg>
        </div>
        <div class="tree btree">
          <div class="rows">
            <div class="row"><span class="ar none"></span><svg class="ti14"><use href="#star"/></svg><span>Favorites</span></div>
            <div class="row"><span class="ar"></span><svg class="ti14"><use href="#bkm"/></svg><span>Spatial Bookmarks</span></div>
            <div class="row"><span class="ar"></span><svg class="ti14"><use href="#hom"/></svg><span>Home</span></div>
            <div class="row"><span class="ar open"></span><svg class="ti14"><use href="#fol"/></svg><span>C:\ (Windows)</span></div>
            <div class="row l1"><span class="ar"></span><svg class="ti14"><use href="#fol"/></svg><span>DRIVERS</span></div>
            <div class="row l1"><span class="ar"></span><svg class="ti14"><use href="#fol"/></svg><span>palettes</span></div>
            <div class="row l1"><span class="ar"></span><svg class="ti14"><use href="#fol"/></svg><span>PerfLogs</span></div>
            <div class="row l1"><span class="ar"></span><svg class="ti14"><use href="#fol"/></svg><span>Program Files</span></div>
            <div class="row l1"><span class="ar"></span><svg class="ti14"><use href="#fol"/></svg><span>Program Files (x86)</span></div>
            <div class="row l1"><span class="ar"></span><svg class="ti14"><use href="#fol"/></svg><span>Users</span></div>
            <div class="row l1"><span class="ar"></span><svg class="ti14"><use href="#fol"/></svg><span>Windows</span></div>
          </div>
          <div class="vscroll"><i class="sup"></i><span class="thumb"></span><i class="sdn"></i></div>
        </div>
      </div>
      <div class="dsplit"></div>
      <div class="dock layers">
        <div class="dtitle"><span>Layers</span><span class="dbtns"><i class="dfl"></i><i class="dcl"></i></span></div>
        <div class="dtools ltools">
          <svg class="i"><use href="#brs"/></svg><svg class="i n2"><use href="#grp"/></svg><svg class="i n3"><use href="#eye"/></svg><span class="dd mini"></span><svg class="i n4"><use href="#funn"/></svg><span class="dd mini"></span><svg class="i n5"><use href="#eps"/></svg><span class="dd lt"></span><svg class="i n6"><use href="#cls"/></svg><svg class="i n7"><use href="#xpd"/></svg><svg class="i n8"><use href="#rem"/></svg>
        </div>
        <div class="tree ltree">
          <div class="row lay"><span class="ar"></span><span class="chk"></span><svg class="ras"><use href="#ras"/></svg><b>W3413G</b></div>
          <div class="row lay"><span class="ar"></span><span class="chk"></span><svg class="ras"><use href="#ras"/></svg><b>W3413F</b></div>
          <div class="row lay"><span class="ar"></span><span class="chk"></span><svg class="ras"><use href="#ras"/></svg><b>W3413E</b></div>
          <div class="row lay"><span class="ar"></span><span class="chk"></span><svg class="ras"><use href="#ras"/></svg><b>W3342B</b></div>
          <div class="row lay"><span class="ar"></span><span class="chk"></span><svg class="ras"><use href="#ras"/></svg><b>W3342A</b></div>
          <div class="row lay"><span class="ar"></span><span class="chk"></span><svg class="ras"><use href="#ras"/></svg><b>W3324G</b></div>
          <div class="row lay"><span class="ar"></span><span class="chk"></span><svg class="ras"><use href="#ras"/></svg><b>W3324F</b></div>
          <div class="row lay"><span class="ar"></span><span class="chk"></span><svg class="ras"><use href="#ras"/></svg><b>W3324E</b></div>
          <div class="row lay"><span class="ar"></span><span class="chk"></span><svg class="ras"><use href="#ras"/></svg><b>W3324D</b></div>
          <div class="row lay cur"><span class="ar"></span><span class="chk"></span><svg class="ras"><use href="#ras"/></svg><b class="ul">W3324H</b></div>
          <div class="row lay"><span class="ar open"></span><span class="chk"></span><svg class="ras"><use href="#ras"/></svg><b>W3413C</b></div>
          <div class="row band">Band 1 (Gray)</div>
          <div class="legend"><span class="ramp"></span><div class="lvals"><span>827,312012</span><span>521,71698</span></div></div>
        </div>
      </div>
    </section>

    <div class="vsplit"></div>

    <section class="canvas">
      <svg class="map" viewBox="335 156 1264 676" preserveAspectRatio="none">
        <defs>
          <filter id="f1" filterUnits="userSpaceOnUse" x="335" y="156" width="1265" height="676"><feGaussianBlur stdDeviation="1.800"/></filter>
          <filter id="f3" filterUnits="userSpaceOnUse" x="335" y="156" width="1265" height="676"><feGaussianBlur stdDeviation="4"/></filter>
          <filter id="f6" filterUnits="userSpaceOnUse" x="335" y="156" width="1265" height="676"><feGaussianBlur stdDeviation="8"/></filter>
          <linearGradient id="gb" gradientUnits="userSpaceOnUse" x1="585" y1="0" x2="746" y2="0">
            <stop offset="0" stop-color="#a5a5a5"/><stop offset=".22" stop-color="#8f8f8f"/><stop offset=".34" stop-color="#333"/><stop offset=".43" stop-color="#050505"/><stop offset=".65" stop-color="#0f0f0f"/><stop offset=".82" stop-color="#363636"/><stop offset=".92" stop-color="#505050"/><stop offset="1" stop-color="#6a6a6a"/>
          </linearGradient>
          <clipPath id="shape"><polygon points="651,280 745.600,361 853,454 905.600,496.500 985.500,559 990,561 1029.700,454 1067.600,454 1067.600,775.500 812,775.500 813,750 807,733 788,706 783.500,692.400 769,689 754,675.500 745.600,670 739,660 726.700,630 725,614 720,589 693,557 682.500,540 640,525 619,510 613,501.500 585,503 569,500 539,493 518,480 485,463 474,452.600 455,442.400 453,439 457,439 529,381 565.500,349.500 581.500,339 602.600,319 636,294"/></clipPath>
          <clipPath id="ta"><rect x="440" y="330" width="145" height="124"/></clipPath>
          <clipPath id="tb"><rect x="585" y="294" width="161" height="160"/></clipPath>
          <clipPath id="td"><rect x="585" y="454" width="161" height="160"/></clipPath>
          <clipPath id="te"><rect x="746" y="454" width="160" height="160"/></clipPath>
          <clipPath id="tf"><rect x="906" y="454" width="162" height="160"/></clipPath>
          <clipPath id="tg"><rect x="746" y="614" width="160" height="162"/></clipPath>
          <clipPath id="th"><rect x="906" y="614" width="162" height="162"/></clipPath>
        </defs>
        <rect x="335" y="156" width="1265" height="676" fill="#fff"/>
        <g clip-path="url(#shape)">
          <rect x="585" y="270" width="161" height="24" fill="#7f7f7f"/>
          <rect x="746" y="340" width="160" height="114" fill="#808080"/>
          <rect x="440" y="454" width="145" height="60" fill="#808080"/>
          <rect x="726" y="614" width="20" height="60" fill="#808080"/>
          <g clip-path="url(#ta)">
            <rect x="440" y="330" width="145" height="124" fill="#0b0b0b"/>
            <polygon points="470,398 520,366 600,340 600,432 575,428 540,418 510,410" fill="#7c7c7c" filter="url(#f3)"/>
            <polygon points="518,368 600,320 600,422 582,420 552,403 532,392" fill="#fff" filter="url(#f3)"/>
            <polygon points="560,345 590,330 590,380 577,368" fill="#d5d5d5" filter="url(#f1)"/>
          </g>
          <g clip-path="url(#tb)">
            <rect x="585" y="294" width="161" height="160" fill="url(#gb)"/>
            <polygon points="640,285 690,285 705,335 680,345 660,335" fill="#454545" filter="url(#f6)"/>
            <ellipse cx="600" cy="365" rx="14" ry="16" fill="#777" filter="url(#f3)"/>
            <ellipse cx="616" cy="335" rx="10" ry="18" fill="#c4c4c4" filter="url(#f3)"/>
            <ellipse cx="608" cy="412" rx="16" ry="24" fill="#ececec" filter="url(#f3)"/>
            <polygon points="575,436 622,430 655,460 575,460" fill="#161616" filter="url(#f3)"/>
            <ellipse cx="744" cy="398" rx="15" ry="42" fill="#fff" filter="url(#f3)"/>
          </g>
          <g clip-path="url(#td)">
            <rect x="585" y="454" width="161" height="160" fill="#000"/>
            <polygon points="580,450 615,450 650,484 610,474 580,482" fill="#9a9a9a" filter="url(#f3)"/>
            <polygon points="606,448 678,448 680,470 668,478 652,484 632,470" fill="#fff" filter="url(#f1)"/>
            <polygon points="698,450 750,450 750,556 722,505" fill="#fff" filter="url(#f1)"/>
          </g>
          <g clip-path="url(#te)">
            <rect x="746" y="454" width="160" height="160" fill="#747474"/>
            <polygon points="850,454 912,500 912,560 860,520" fill="#505050" filter="url(#f6)"/>
            <ellipse cx="892" cy="548" rx="20" ry="14" fill="#b5b5b5" filter="url(#f3)"/>
            <polygon points="740,445 858,445 869,480 852,507 834,510 809,493 790,472 765,470 740,474" fill="#fff" filter="url(#f3)"/>
            <polygon points="736,480 780,488 794,527 780,540 762,534 736,518" fill="#fff" filter="url(#f3)"/>
            <polygon points="740,545 788,558 830,558 859,572 912,582 912,625 740,625" fill="#000" filter="url(#f3)"/>
          </g>
          <g clip-path="url(#tf)">
            <rect x="906" y="454" width="162" height="160" fill="#2c2c2c"/>
            <rect x="1029" y="454" width="39" height="70" fill="#474747" filter="url(#f6)"/>
            <ellipse cx="930" cy="558" rx="28" ry="10" transform="rotate(18 930 558)" fill="#e4e4e4" filter="url(#f3)"/>
            <ellipse cx="978" cy="558" rx="16" ry="8" fill="#c4c4c4" filter="url(#f3)"/>
            <ellipse cx="1045" cy="555" rx="26" ry="36" fill="#a8a8a8" filter="url(#f6)"/>
            <ellipse cx="1052" cy="553" rx="15" ry="24" fill="#fff" filter="url(#f3)"/>
            <ellipse cx="1036" cy="597" rx="22" ry="8" fill="#d0d0d0" filter="url(#f3)"/>
            <polygon points="900,592 1000,597 1040,612 1075,606 1075,625 900,625" fill="#050505" filter="url(#f3)"/>
          </g>
          <g clip-path="url(#tg)">
            <rect x="746" y="614" width="160" height="162" fill="#000"/>
            <ellipse cx="769" cy="642" rx="18" ry="28" fill="#666" filter="url(#f3)"/>
            <polygon points="824,610 910,610 910,765 880,748 868,700 844,672" fill="#8d8d8d" filter="url(#f3)"/>
            <polygon points="840,608 885,608 912,630 912,742 885,740 880,705 858,675 848,668 838,640" fill="#fff" filter="url(#f1)"/>
            <ellipse cx="836" cy="696" rx="9" ry="20" fill="#8a8a8a" filter="url(#f3)"/>
            <ellipse cx="893" cy="760" rx="18" ry="20" fill="#666" filter="url(#f6)"/>
          </g>
          <g clip-path="url(#th)">
            <rect x="906" y="614" width="162" height="162" fill="#787878"/>
            <ellipse cx="955" cy="692" rx="52" ry="36" fill="#d4d4d4" filter="url(#f6)"/>
            <ellipse cx="1057" cy="668" rx="16" ry="24" fill="#c4c4c4" filter="url(#f6)"/>
            <ellipse cx="990" cy="712" rx="10" ry="18" fill="#fff" filter="url(#f3)"/>
            <ellipse cx="960" cy="729" rx="20" ry="6" fill="#fff" filter="url(#f3)"/>
            <polygon points="896,600 1078,600 1078,648 1020,640 985,650 950,632 896,622" fill="#050505" filter="url(#f6)"/>
            <polygon points="896,735 950,745 985,786 896,786" fill="#0a0a0a" filter="url(#f6)"/>
            <polygon points="1010,742 1078,722 1078,786 990,786" fill="#555" filter="url(#f6)"/>
          </g>
          <path d="M585 453.500H1000M726 613.500H1068" stroke="#111" stroke-width=".8"/>
        </g>
      </svg>
    </section>
  </main>

  <footer class="status">
    <div class="locator"><svg class="srch" viewBox="0 0 12 12"><circle cx="7" cy="5" r="3.500" fill="none" stroke="#888"/><path d="M4.500 7.500L1.500 11" stroke="#888" stroke-width="1.300"/></svg><span>Type to locate (Ctrl+K)</span></div>
    <span class="msg">Pan distance 1,517 km (110,916992°W)</span>
    <div class="stright">
      <span>Coordinate</span>
      <div class="field fcoord">264471&nbsp;&nbsp;7672876</div>
      <svg class="sico togg" viewBox="0 0 14 14"><path d="M3 2l8 10M4 8c-2-2 0-5 2-3M10 6c2 2 0 5-2 3" fill="none" stroke="#333" stroke-width="1.500"/></svg>
      <span class="m13">Scale</span>
      <div class="field fscale"><span class="val">1:117585</span><span class="carets"></span></div>
      <svg class="sico lock" viewBox="0 0 12 14"><path d="M3 6V4a3 3 0 0 1 6 0v2" fill="none" stroke="#555" stroke-width="1.300"/><rect x="1.500" y="6" width="9" height="7" fill="#555"/></svg>
      <span class="m8">Magnifier</span>
      <div class="field fmag"><span class="val">100%</span><span class="arrows"><i class="up"></i><i class="down"></i></span></div>
      <span class="m8">Rotation</span>
      <div class="field frot"><span class="val">0,0 °</span><span class="arrows"><i class="up"></i><i class="down"></i></span></div>
      <span class="chk rchk"></span>
      <span class="m5">Render</span>
      <svg class="sico glob" viewBox="0 0 12 12"><circle cx="6" cy="6" r="5" fill="#bbb" stroke="#777"/><path d="M1 6h10M6 1v10M2 3.500h8M2 8.500h8" stroke="#777" stroke-width=".7"/></svg>
      <span class="m2">EPSG:3067</span>
      <svg class="sico bub" viewBox="0 0 14 14"><path d="M2 1h10a1.500 1.500 0 0 1 1.500 1.500v6A1.500 1.500 0 0 1 12 10H9l-2 3-2-3H2A1.500 1.500 0 0 1 .5 8.500v-6A1.500 1.500 0 0 1 2 1z" fill="#555"/><path d="M4 5.500h1M6.500 5.500h1M9 5.500h1" stroke="#fff"/></svg>
    </div>
  </footer>
</div>
<span class="sliver"></span>
</body>
</html>
```

FILE: styles.css
```css
* { box-sizing: border-box; }
html, body { margin: 0; height: 100%; overflow: hidden; }
body { font: 12px/1 "Liberation Sans", Arial, sans-serif; color: #1c1c1c; background: #f0f0f0; }
.sprites { display: none; }
.sliver { position: absolute; left: 0; top: 8px; width: 1px; height: 92px; background: #4c6a46; }
.app { width: 1600px; height: 860px; display: flex; flex-direction: column; }

.tt { font: 7px "Liberation Sans", sans-serif; }
.ta { font: 12px "Liberation Sans", sans-serif; fill: #666; }
.tb1 { font: bold 6.5px "Liberation Sans", sans-serif; fill: #222; }
.tb2 { font: bold 8px "Liberation Sans", sans-serif; fill: #111; }
.tw { font: bold 7px "Liberation Sans", sans-serif; fill: #fff; }
.ti { font: italic bold 15px "Liberation Serif", serif; fill: #fff; text-anchor: middle; }
.tq { font: bold 15px "Liberation Sans", sans-serif; fill: #fff; text-anchor: middle; }

.titlebar { height: 19px; flex: none; display: flex; align-items: center; background: #f7f5f7; padding-left: 2px; color: #444; }
.logo { width: 14px; height: 14px; }
.wintitle { margin-left: 5px; font-size: 10px; }
.winbtns { margin-left: auto; display: flex; align-items: center; padding-right: 14px; gap: 26px; }
.wb { width: 12px; height: 12px; }

.menubar { height: 19px; flex: none; display: flex; align-items: center; background: #f0f0f0; padding-left: 4px; font-size: 12px; color: #111; }
.mi { padding: 0 5.450px; white-space: nowrap; }

.tb { height: 39px; flex: none; display: flex; align-items: center; background: linear-gradient(#fbfbfb, #f0f0f0); border-bottom: 1px solid #cdcdcd; }
.tb.tall { height: 40px; }
.i { width: 34px; height: 26px; flex: none; display: block; }
.off { opacity: .4; filter: grayscale(1); }
.dim { filter: grayscale(.4) opacity(.85); }
.on { display: block; width: 34px; height: 34px; padding-top: 3px; background: #dedede; border: 1px solid #c4c4c4; border-radius: 2px; flex: none; }
.on .i { width: 32px; }

.hd { width: 12px; height: 24px; flex: none; background: radial-gradient(circle, #b8b8b8 .6px, transparent .9px) 4px 0/3px 3px; background-clip: content-box; padding: 0 3px; }
.h10 { width: 10px; }
.h14 { width: 14px; }
.h15 { width: 15px; }
.h16 { width: 16px; }
.sp { width: 6px; height: 26px; flex: none; background: linear-gradient(#d8d8d8, #d8d8d8) center/1px 100% no-repeat; }
.dd { width: 11px; height: 10px; flex: none; position: relative; }
.dd::after { content: ""; position: absolute; left: 1px; top: 3px; border: 3px solid transparent; border-top: 4px solid #555; border-bottom: 0; }
.dd.lt::after { border-top-color: #aaa; }
.dd.n { width: 9px; }
.dd.mini { width: 0; }
.dd.mini::after { left: -9px; top: 8px; border-width: 2px; border-top-width: 3px; border-bottom-width: 0; }

.snapbox { width: 32px; height: 32px; margin-left: 1px; background: #dedede; border: 1px solid #d4d4d4; border-radius: 2px; flex: none; }
.dots { display: block; width: 100%; height: 100%; background:
  linear-gradient(#bbb, #bbb) 8px 8px/3px 3px no-repeat,
  linear-gradient(#bbb, #bbb) 20px 10px/3px 3px no-repeat,
  linear-gradient(#bbb, #bbb) 15px 20px/3px 3px no-repeat; }

.spin, .field { height: 22px; display: flex; align-items: center; background: #fff; border: 1px solid #c6c6c6; border-radius: 2px; flex: none; }
.dis { background: #f0f0f0; color: #888; font-size: 13px; border-color: #cfcfcf; }
.snapval { width: 84px; margin-left: 1px; background: linear-gradient(90deg, #eaeaea 70px, #f6f6f6 70px); }
.snapunit { width: 89px; margin-left: 2px; background: #f6f6f6; }
.val { padding-left: 4px; flex: 1; white-space: nowrap; }
.arrows { width: 12px; height: 100%; flex: none; display: flex; flex-direction: column; justify-content: center; gap: 3px; align-items: center; border-left: 1px solid #e2e2e2; }
.up, .down { width: 0; height: 0; border: 3px solid transparent; display: block; }
.up { border-bottom: 4px solid #666; border-top: 0; }
.down { border-top: 4px solid #666; border-bottom: 0; }
.carets { width: 16px; height: 100%; flex: none; position: relative; }
.carets::after { content: ""; position: absolute; left: 4px; top: 8px; border: 4px solid transparent; border-top: 4px solid #777; border-bottom: 0; }

.workspace { height: 676px; flex: none; display: flex; min-height: 0; }
.lefttools { width: 51px; flex: none; background: linear-gradient(90deg, #fafafa, #efefef); border-right: 1px solid #b4b4b4; display: flex; flex-direction: column; }
.vhd { height: 9px; flex: none; background: radial-gradient(circle, #b8b8b8 .6px, transparent .9px) 0 0/3px 3px; background-clip: content-box; padding: 0 16px; }
.gapv { height: 11px; padding: 4px 16px; }
.lgrp { display: flex; flex-direction: column; padding-left: 9px; }
.lgrp .i { height: 33.500px; padding: 3.500px 0; }
.second { padding-left: 5px; }
.lrow { display: flex; align-items: center; height: 33.500px; }
.lrow .dd { margin-left: -4px; }

.docks { width: 278px; flex: none; display: flex; flex-direction: column; background: #f0f0f0; }
.dock { display: flex; flex-direction: column; }
.browser { height: 224px; flex: none; }
.layers { flex: 1; min-height: 0; }
.dsplit { height: 5px; flex: none; background: radial-gradient(circle, #b8b8b8 .6px, transparent .9px) center/3px 3px repeat-x; }
.dtitle { height: 19px; flex: none; display: flex; align-items: center; justify-content: space-between; padding: 0 0 0 3px; font-size: 12.500px; color: #222; }
.dbtns { display: flex; gap: 2px; padding-right: 2px; }
.dfl, .dcl { width: 9px; height: 9px; background: #e6e6e6; border: 1px solid #8a8a8a; border-radius: 1px; display: block; position: relative; }
.dcl::after { content: ""; position: absolute; inset: 0; background: linear-gradient(45deg, transparent 42%, #444 42% 58%, transparent 58%), linear-gradient(-45deg, transparent 42%, #444 42% 58%, transparent 58%); }
.dfl::after { content: ""; position: absolute; inset: 1px 0 0 1px; border: solid #777; border-width: 1px 0 0 1px; }
.dtools { height: 30px; flex: none; display: flex; align-items: center; padding-bottom: 3px; }
.dtools .i { width: 27.500px; height: 22px; }
.browser .dtools { padding-left: 2px; }
.ltools { padding-left: 2px; padding-bottom: 2px; }
.ltools .i { width: 28px; }
.ltools .n4 { margin-left: -1px; }
.ltools .dd.lt { width: 9px; }
.ltools .n6 { margin-left: 1px; width: 27px; }
.ltools .n7, .ltools .n8 { width: 26.500px; }

.tree { background: #fff; border: 1px solid #c8c8c8; border-left-color: #bcbcbc; }
.btree { height: 175px; flex: none; display: flex; overflow: hidden; }
.rows { flex: 1; min-width: 0; overflow: hidden; }
.ltree { flex: 1; min-height: 0; padding-top: 1px; }
.row { height: 16.600px; display: flex; align-items: center; padding-left: 4px; white-space: nowrap; font-size: 12px; }
.row.l1 { padding-left: 20.500px; }
.ar { width: 8px; height: 8px; flex: none; position: relative; }
.ar::after { content: ""; position: absolute; left: 2px; top: 0; border: 3.500px solid transparent; border-left: 4px solid #555; border-right: 0; }
.ar.open::after { left: 0; top: 2px; border: 3.500px solid transparent; border-top: 4px solid #555; border-bottom: 0; }
.ar.none::after { display: none; }
.ti14 { width: 13px; height: 13px; margin: 0 5px 0 7px; flex: none; }
.lay b { font: bold 12px "DejaVu Sans", sans-serif; color: #111; letter-spacing: -.1px; }
.cur { background: #f0f0f0; }
.ul { text-decoration: underline; text-decoration-color: #777; }
.chk { width: 12px; height: 12px; flex: none; background: #fff; border: 1px solid #c0c0c0; margin-left: 6px; position: relative; }
.chk::after { content: ""; position: absolute; left: 3.500px; top: 1px; width: 4px; height: 7px; border: solid #222; border-width: 0 1.300px 1.300px 0; transform: rotate(40deg); }
.ras { width: 11px; height: 11px; margin: 0 5px 0 7px; flex: none; }
.band { padding-left: 35px; color: #222; }
.legend { height: 100px; display: flex; margin-left: 35px; }
.ramp { width: 16px; height: 100px; flex: none; background: linear-gradient(#fff, #bdbdbd 25%, #777 50%, #333 75%, #000); }
.lvals { display: flex; flex-direction: column; justify-content: space-between; margin-left: 6px; font-size: 13.600px; line-height: 16px; }

.vscroll { width: 13px; flex: none; background: #ededed; display: flex; flex-direction: column; align-items: center; }
.thumb { width: 12px; height: 28px; background: #fafafa; flex: none; margin: 6px 0 auto; }
.sup, .sdn { width: 0; height: 0; border: 3.500px solid transparent; display: block; margin-top: 4px; }
.sup { border-bottom: 4px solid #555; border-top: 0; }
.sdn { border-top: 4px solid #555; border-bottom: 0; margin: 0 0 4px; }

.vsplit { width: 5px; flex: none; background: #f0f0f0; }
.canvas { flex: 1; min-width: 0; background: #fff; border-left: 1px solid #a8a8a8; border-right: 1px solid #c4c4c4; }
.map { display: block; width: 100%; height: 100%; }

.status { height: 28px; flex: none; display: flex; align-items: center; background: #f0f0f0; padding: 2px 0 0 5px; border-top: 1px solid #dcdcdc; border-bottom: 1px solid #555; font-size: 11.700px; color: #222; }
.locator { width: 241px; height: 21px; background: #fff; border: 1px solid #c4c4c4; border-radius: 2px; display: flex; align-items: center; color: #777; padding-left: 6px; flex: none; font-size: 12px; }
.srch { width: 12px; height: 12px; margin-right: 6px; }
.msg { margin-left: 7px; white-space: nowrap; font-size: 12.200px; }
.stright { margin-left: auto; display: flex; align-items: center; padding-right: 4px; white-space: nowrap; }
.field { height: 21px; }
.fcoord { width: 106px; margin-left: 3px; padding-left: 5px; }
.togg { width: 13px; height: 14px; margin-left: 3px; }
.m13 { margin-left: 13px; }
.fscale { width: 71px; margin-left: 2px; }
.fscale .val { padding-left: 2px; }
.lock { width: 10px; height: 12px; margin-left: 10px; }
.m8 { margin-left: 8px; }
.fmag { width: 82px; margin-left: 2px; }
.frot { width: 81px; margin-left: 9px; }
.rchk { margin-left: 6px; }
.m5 { margin-left: 5px; }
.glob { width: 12px; height: 12px; margin-left: 13px; }
.m2 { margin-left: 2px; font-size: 11.200px; }
.bub { width: 14px; height: 14px; margin-left: 23px; }
```
